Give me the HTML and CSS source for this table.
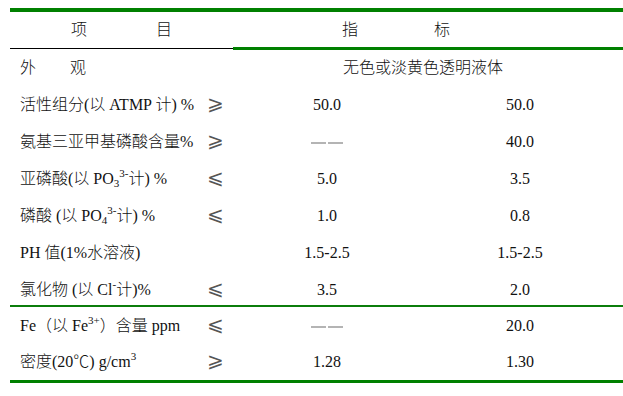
FILE: index.html
```html
<!DOCTYPE html>
<html lang="zh">
<head>
<meta charset="utf-8">
<title>ATMP 指标</title>
<link rel="stylesheet" href="styles.css">
</head>
<body>
<div class="tbl">
  <div class="row head">
    <div class="h-item"><span>项</span><span>目</span></div>
    <div class="h-spec"><span>指</span><span>标</span></div>
  </div>
  <div class="head-rule"><div class="rule-black"></div><div class="rule-green"></div></div>

  <div class="row r-first">
    <div class="lbl split"><span>外</span><span>观</span></div>
    <div class="sym"></div>
    <div class="val wide">无色或淡黄色透明液体</div>
  </div>
  <div class="row">
    <div class="lbl">活性组分(以 ATMP 计) %</div>
    <div class="sym">⩾</div>
    <div class="val">50.0</div>
    <div class="val">50.0</div>
  </div>
  <div class="row">
    <div class="lbl">氨基三亚甲基磷酸含量%</div>
    <div class="sym">⩾</div>
    <div class="val"><span class="dash"><i></i><i></i></span></div>
    <div class="val">40.0</div>
  </div>
  <div class="row">
    <div class="lbl">亚磷酸(以 PO<sub>3</sub><sup>3-</sup>计) %</div>
    <div class="sym">⩽</div>
    <div class="val">5.0</div>
    <div class="val">3.5</div>
  </div>
  <div class="row">
    <div class="lbl">磷酸 (以 PO<sub>4</sub><sup>3-</sup>计) %</div>
    <div class="sym">⩽</div>
    <div class="val">1.0</div>
    <div class="val">0.8</div>
  </div>
  <div class="row">
    <div class="lbl">PH 值(1%水溶液)</div>
    <div class="sym"></div>
    <div class="val">1.5-2.5</div>
    <div class="val">1.5-2.5</div>
  </div>
  <div class="row r-last">
    <div class="lbl">氯化物 (以 Cl<sup>-</sup>计)%</div>
    <div class="sym">⩽</div>
    <div class="val">3.5</div>
    <div class="val">2.0</div>
  </div>
  <div class="mid-rule"></div>
  <div class="row">
    <div class="lbl">Fe（以 Fe<sup>3+</sup>）含量 ppm</div>
    <div class="sym">⩽</div>
    <div class="val"><span class="dash"><i></i><i></i></span></div>
    <div class="val">20.0</div>
  </div>
  <div class="row r-end">
    <div class="lbl">密度(20℃) g/cm<sup>3</sup></div>
    <div class="sym">⩾</div>
    <div class="val">1.28</div>
    <div class="val">1.30</div>
  </div>
</div>
</body>
</html>
```

FILE: styles.css
```css
html, body {
  margin: 0;
  padding: 0;
  background: #fff;
}

body {
  font-family: "Liberation Serif", "Noto Sans CJK SC", serif;
  font-size: 16px;
  font-weight: 300;
  color: #111;
}

.tbl {
  margin: 8px 0 0 10px;
  width: 613px;
  border-top: 4px solid #008000;
  border-bottom: 3px solid #008000;
}

.row {
  display: grid;
  grid-template-columns: 195px 28px 188px 198px;
  align-items: center;
  height: 37px;
  line-height: 1;
  white-space: nowrap;
}

.row.head {
  display: flex;
  height: 35px;
}

.h-item {
  width: 223px;
  display: flex;
  justify-content: center;
  gap: 69px;
}

.h-spec {
  display: flex;
  gap: 76px;
  padding-left: 109px;
}

.head-rule {
  display: flex;
  height: 3px;
}

.rule-black {
  width: 223px;
  height: 1px;
  margin-top: 1px;
  background: #000;
}

.rule-green {
  flex: 1;
  background: #008000;
}

.mid-rule {
  height: 2px;
  background: #0b7d0b;
}

.r-first {
  height: 36px;
}

.r-last {
  height: 34px;
  padding-top: 3px;
  box-sizing: border-box;
}

.r-end {
  height: 36px;
}

.lbl {
  padding-left: 10px;
}

.split {
  display: flex;
  gap: 34px;
}

.sym {
  padding-left: 2px;
  margin-top: -4px;
  font-family: "DejaVu Sans", sans-serif;
  font-size: 20px;
  color: #555;
}

.val {
  text-align: center;
}

.wide {
  grid-column: 3 / 5;
  padding-right: 6px;
}

sub, sup {
  font-size: 11px;
  line-height: 0;
  position: relative;
  vertical-align: baseline;
}

sub {
  top: 3px;
}

sup {
  top: -7px;
}

.dash {
  display: inline-flex;
  gap: 2px;
  vertical-align: middle;
}

.dash i {
  display: block;
  width: 15px;
  height: 2px;
  background: #b4b4b4;
}
```
